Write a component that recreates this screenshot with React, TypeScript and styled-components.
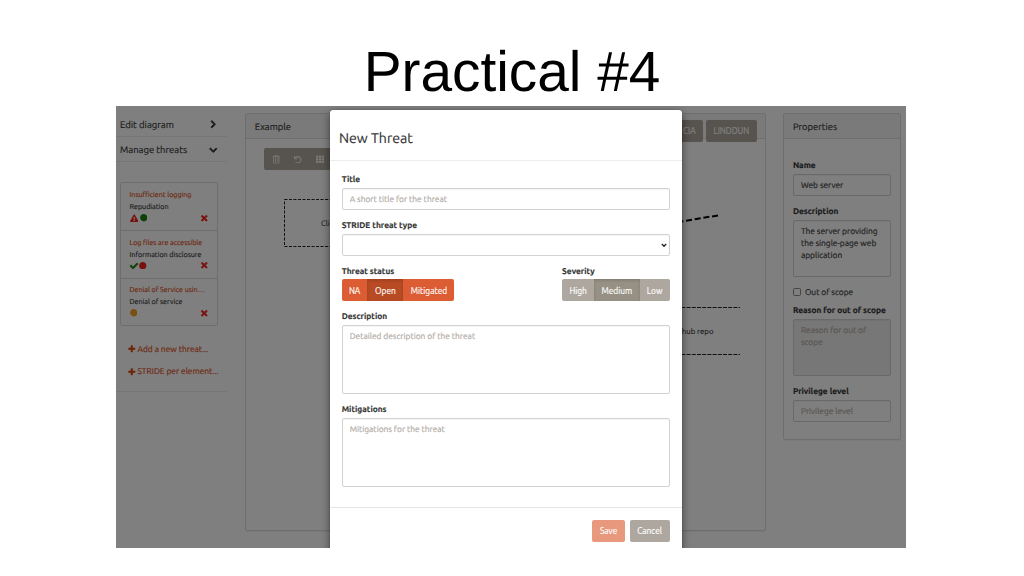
import React from "react";
import styled, { createGlobalStyle } from "styled-components";
import {
  FaCheck,
  FaChevronDown,
  FaChevronRight,
  FaCircle,
  FaExclamationTriangle,
  FaPlus,
  FaRegTrashAlt,
  FaTh,
  FaTimes,
  FaUndo,
} from "react-icons/fa";

const color = {
  text: "#333333",
  primary: "#dd4814",
  neutral: "#aea79f",
  border: "#dddddd",
  red: "#f0241c",
  green: "#1c8010",
  amber: "#f0a020",
};

const GlobalStyle = createGlobalStyle`
  * { box-sizing: border-box; }
  body {
    margin: 0;
    background: #ffffff;
    font-family: Ubuntu, "Noto Sans", sans-serif;
    font-size: 8.35px;
    color: ${color.text};
    text-rendering: geometricPrecision;
  }
`;

const Slide = styled.main`
  width: 1024px;
  height: 576px;
  overflow: hidden;
  display: flex;
  flex-direction: column;
  align-items: center;
`;

const SlideTitle = styled.h1`
  margin: 0;
  height: 106px;
  padding-top: 40px;
  font: 400 56.8px/66px "Liberation Sans", sans-serif;
  color: #000000;
  white-space: nowrap;
`;

const Frame = styled.section`
  position: relative;
  width: 790px;
  height: 442px;
  margin-right: 2px;
  overflow: hidden;
`;

const Page = styled.div`
  display: flex;
  align-items: flex-start;
  height: 100%;
`;

const T = styled.span<{ $size?: number }>`
  ${(p) => (p.$size ? `font-size: ${p.$size}px;` : "")}
  white-space: nowrap;
  -webkit-text-stroke: 0.15px currentColor;
`;

/* Left column */
const Sidebar = styled.aside`
  width: 111px;
  height: 285.5px;
  border-bottom: 1px solid #ececec;
  padding-top: 5px;
`;

const AccordionRow = styled.div`
  display: flex;
  align-items: center;
  justify-content: space-between;
  height: 25.5px;
  padding: 2.4px 9.5px 0 4px;
  border-bottom: 1px solid #ececec;
  font-size: 9.5px;
`;

const ThreatList = styled.ul`
  list-style: none;
  margin: 20px 9px 0 4px;
  padding: 0;
  border: 1px solid ${color.border};
  border-radius: 2px;
`;

const ThreatItem = styled.li`
  height: 47.3px;
  padding: 7.3px 8.5px 0 8.5px;
  line-height: 11.7px;
  font-size: 7.15px;
  & + & {
    border-top: 1px solid ${color.border};
    padding-top: 6.8px;
  }
`;

const ThreatLine = styled.div<{ $link?: boolean }>`
  height: 11.7px;
  color: ${(p) => (p.$link ? color.primary : color.text)};
`;

const ThreatIcons = styled.div`
  display: flex;
  align-items: center;
  gap: 1.5px;
  height: 8.4px;
`;

const Remove = styled.span`
  display: flex;
  margin-left: auto;
`;

const SideLink = styled.div`
  display: flex;
  align-items: center;
  gap: 2.4px;
  height: 22.3px;
  padding-left: 11.5px;
  color: ${color.primary};
  font-size: 8.4px;
`;

const SideLinks = styled.div`
  padding-top: 12px;
`;

/* Panels */
const Panel = styled.section<{ $w: number; $h: number; $left: number }>`
  flex: none;
  width: ${(p) => p.$w}px;
  height: ${(p) => p.$h}px;
  margin: 7.3px 0 0 ${(p) => p.$left}px;
  border: 1px solid ${color.border};
  border-radius: 2px;
  box-shadow: 0 1px 1px rgba(0, 0, 0, 0.05);
`;

const PanelHead = styled.header`
  display: flex;
  align-items: center;
  justify-content: space-between;
  height: 24.5px;
  padding: 0 8px 0 8.5px;
  background: #f5f5f5;
  border-bottom: 1px solid ${color.border};
  font-size: 9.4px;
`;

const HeadButtons = styled.div`
  display: flex;
  gap: 3px;
  height: 22px;
  margin-top: 9px;
`;

const HeadButton = styled.button<{ $w: number }>`
  width: ${(p) => p.$w}px;
  padding: 0;
  border: 0;
  border-radius: 2px;
  background: ${color.neutral};
  color: #ffffff;
  font: inherit;
  font-size: 8.35px;
`;

const Toolbar = styled.div`
  display: flex;
  align-items: center;
  gap: 14px;
  width: 300px;
  height: 22px;
  margin: 9.5px 0 0 17.5px;
  padding-left: 8px;
  border-radius: 2px;
  background: ${color.neutral};
  color: #f0efee;
`;

const Diagram = styled.svg`
  display: block;
  width: 518px;
  height: 300px;
`;

/* Form parts */
const Fields = styled.div<{ $pad: string }>`
  display: flex;
  flex-direction: column;
  padding: ${(p) => p.$pad};
`;

const Label = styled.label`
  display: block;
  height: 17.75px;
  line-height: 18.5px;
  font-weight: 700;
`;

const Control = styled.div<{ $h?: number; $muted?: boolean; $off?: boolean }>`
  display: flex;
  justify-content: space-between;
  height: ${(p) => p.$h ?? 22}px;
  margin-bottom: 6px;
  padding: 5px 7px 4px;
  line-height: 11.8px;
  border: 1px solid #d2d2d2;
  border-radius: 2px;
  background: ${(p) => (p.$off ? "#eeeeee" : "#ffffff")};
  color: ${(p) => (p.$muted ? color.neutral : color.text)};
  box-shadow: inset 0 1px 1px rgba(0, 0, 0, 0.04);
`;

const CheckRow = styled.div`
  display: flex;
  align-items: center;
  gap: 4px;
  height: 17.5px;
`;

const CheckBox = styled.span`
  width: 8px;
  height: 8px;
  border: 1px solid #888888;
  border-radius: 1.5px;
`;

const Backdrop = styled.div`
  position: absolute;
  inset: 0;
  background: rgba(0, 0, 0, 0.5);
`;

const Dialog = styled.div`
  position: absolute;
  left: 214px;
  top: 4px;
  width: 351.6px;
  height: 460px;
  border-radius: 3px 3px 0 0;
  background: #ffffff;
  box-shadow: 0 3px 9px rgba(0, 0, 0, 0.5), 0 0 1px rgba(0, 0, 0, 0.5);
`;

const DialogHead = styled.header`
  display: flex;
  align-items: center;
  height: 51px;
  padding: 5px 9px 0;
  border-bottom: 1px solid #eeeeee;
`;

const DialogFoot = styled.footer`
  display: flex;
  justify-content: flex-end;
  gap: 4.5px;
  height: 42px;
  padding: 12px 12px 0;
  border-top: 1px solid #e5e5e5;
`;

const Split = styled.div`
  display: flex;
  justify-content: space-between;
  margin-bottom: 6px;
`;

const Segments = styled.div<{ $bg: string }>`
  display: flex;
  height: 22px;
  border-radius: 2px;
  overflow: hidden;
  background: ${(p) => p.$bg};
`;

const Segment = styled.button<{ $w: number; $on?: string }>`
  width: ${(p) => p.$w}px;
  padding: 0.6px 0 0;
  border: 0;
  background: ${(p) => p.$on ?? "transparent"};
  box-shadow: ${(p) => (p.$on ? "inset 0 1.5px 3px rgba(0, 0, 0, 0.14)" : "none")};
  color: #ffffff;
  font: inherit;
`;

const Action = styled.button<{ $w: number; $bg: string }>`
  width: ${(p) => p.$w}px;
  height: 22px;
  padding: 0;
  border: 0;
  border-radius: 2px;
  background: ${(p) => p.$bg};
  color: #ffffff;
  font: inherit;
`;

const CaretIcon = styled.svg`
  width: 6px;
  height: 5px;
  margin: 3.5px -5px 0 0;
`;

const Caret = () => (
  <CaretIcon viewBox="0 0 6 5">
    <path d="M0.8 1 3 3.3 5.2 1" fill="none" stroke="#222" strokeWidth="1.3" />
  </CaretIcon>
);

const Heavy = styled.span`
  display: flex;
  svg {
    overflow: visible;
    stroke: currentColor;
    stroke-width: 48px;
  }
`;

const RemoveButton = () => (
  <Remove>
    <Heavy><FaTimes size={8.5} color={color.red} /></Heavy>
  </Remove>
);

export default function App() {
  return (
    <Slide>
      <GlobalStyle />
      <SlideTitle>Practical #4</SlideTitle>
      <Frame>
        <Page>
          <Sidebar>
            <AccordionRow>
              <T>Edit diagram</T>
              <Heavy><FaChevronRight size={8.5} /></Heavy>
            </AccordionRow>
            <AccordionRow>
              <T>Manage threats</T>
              <Heavy><FaChevronDown size={8.5} /></Heavy>
            </AccordionRow>
            <ThreatList>
              <ThreatItem>
                <ThreatLine $link><T>Insufficient logging</T></ThreatLine>
                <ThreatLine><T>Repudiation</T></ThreatLine>
                <ThreatIcons>
                  <FaExclamationTriangle size={8.5} color={color.red} />
                  <FaCircle size={7.5} color={color.green} />
                  <RemoveButton />
                </ThreatIcons>
              </ThreatItem>
              <ThreatItem>
                <ThreatLine $link><T>Log files are accessible</T></ThreatLine>
                <ThreatLine><T>Information disclosure</T></ThreatLine>
                <ThreatIcons>
                  <Heavy><FaCheck size={8} color={color.green} /></Heavy>
                  <FaCircle size={7.5} color={color.red} />
                  <RemoveButton />
                </ThreatIcons>
              </ThreatItem>
              <ThreatItem>
                <ThreatLine $link><T>Denial of Service usin…</T></ThreatLine>
                <ThreatLine><T>Denial of service</T></ThreatLine>
                <ThreatIcons>
                  <FaCircle size={7.5} color={color.amber} />
                  <RemoveButton />
                </ThreatIcons>
              </ThreatItem>
            </ThreatList>
            <SideLinks>
              <SideLink><Heavy><FaPlus size={7.6} /></Heavy><T>Add a new threat...</T></SideLink>
              <SideLink><Heavy><FaPlus size={7.6} /></Heavy><T>STRIDE per element...</T></SideLink>
            </SideLinks>
          </Sidebar>

          <Panel $w={520.5} $h={418} $left={18.3}>
            <PanelHead>
              <T>Example</T>
              <HeadButtons>
                <HeadButton $w={27}><T>CIA</T></HeadButton>
                <HeadButton $w={51}><T>LINDDUN</T></HeadButton>
              </HeadButtons>
            </PanelHead>
            <Toolbar>
              <FaRegTrashAlt size={8.5} />
              <FaUndo size={7.5} />
              <FaTh size={8.5} />
            </Toolbar>
            <Diagram viewBox="246 170 518 300">
              <rect x="284.5" y="199.5" width="95" height="47" fill="none" stroke="#222" strokeWidth="1" strokeDasharray="3 1.5" />
              <text x="321" y="226" fontSize="7.8">Client</text>
              <path d="M660 225 720.5 215" stroke="#000" strokeWidth="2" strokeDasharray="6 2.8" />
              <path d="M645 307.5H740M645 354.5H740" stroke="#222" strokeWidth="1" strokeDasharray="4 1.2" />
              <text x="713.5" y="334" fontSize="7.8" textAnchor="end">Github repo</text>
            </Diagram>
          </Panel>

          <Panel $w={117.5} $h={326.5} $left={17.6}>
            <PanelHead><T>Properties</T></PanelHead>
            <Fields $pad="17.7px 9px 0 8.5px">
              <Label><T>Name</T></Label>
              <Control><T>Web server</T></Control>
              <Label><T>Description</T></Label>
              <Control $h={57.5}>
                <span><T>The server providing</T><br /><T>the single-page web</T><br /><T>application</T></span>
              </Control>
              <CheckRow><CheckBox /><T>Out of scope</T></CheckRow>
              <Label><T>Reason for out of scope</T></Label>
              <Control $h={57.5} $muted $off>
                <span><T>Reason for out of</T><br /><T>scope</T></span>
              </Control>
              <Label><T>Privilege level</T></Label>
              <Control $muted><T>Privilege level</T></Control>
            </Fields>
          </Panel>
        </Page>

        <Backdrop />

        <Dialog role="dialog">
          <DialogHead><T $size={14.1}>New Threat</T></DialogHead>
          <Fields $pad="9.2px 12px 14px 11.7px">
            <Label><T>Title</T></Label>
            <Control $muted><T>A short title for the threat</T></Control>
            <Label><T>STRIDE threat type</T></Label>
            <Control><span /><Caret /></Control>
            <Split>
              <div>
                <Label><T>Threat status</T></Label>
                <Segments $bg="#dc5c34">
                  <Segment $w={25.8}><T>NA</T></Segment>
                  <Segment $w={36} $on="#b84a24"><T>Open</T></Segment>
                  <Segment $w={51}><T>Mitigated</T></Segment>
                </Segments>
              </div>
              <div>
                <Label><T>Severity</T></Label>
                <Segments $bg={color.neutral}>
                  <Segment $w={32}><T>High</T></Segment>
                  <Segment $w={45.5} $on="#979084"><T>Medium</T></Segment>
                  <Segment $w={30}><T>Low</T></Segment>
                </Segments>
              </div>
            </Split>
            <Label><T>Description</T></Label>
            <Control $h={69} $muted><T>Detailed description of the threat</T></Control>
            <Label><T>Mitigations</T></Label>
            <Control $h={69} $muted><T>Mitigations for the threat</T></Control>
          </Fields>
          <DialogFoot>
            <Action $w={33} $bg="#e8987c"><T>Save</T></Action>
            <Action $w={40} $bg={color.neutral}><T>Cancel</T></Action>
          </DialogFoot>
        </Dialog>
      </Frame>
    </Slide>
  );
}
